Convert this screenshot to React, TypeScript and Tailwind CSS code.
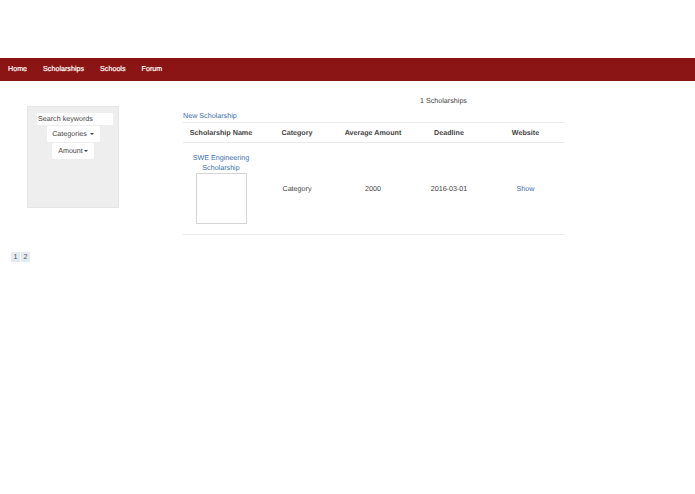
import React from 'react'

const links = ['Home', 'Scholarships', 'Schools', 'Forum']
const linkColor = 'text-[#3d6ea8]'

const Caret = () => (
  <span className="inline-block w-0 h-0 border-x-[2px] border-x-transparent border-t-[2px] border-t-[#444]" />
)

export default function App() {
  return (
    <div className="min-h-[494px] bg-white text-[7.17px] leading-[10px] text-[#444] antialiased [text-rendering:geometricPrecision] font-['Liberation_Sans',Arial,sans-serif]">
      <div className="h-[58px]" />
      <nav className="h-[23px] bg-[#8b1414] flex items-center pl-[8px] gap-[16px] text-white [-webkit-text-stroke:0.2px_white]">
        {links.map(l => (
          <span key={l} className="pb-[2px]">{l}</span>
        ))}
      </nav>

      <div className="flex">
        <aside className="ml-[27px] mt-[25px] w-[92px] h-[102px] bg-[#eeeeee] border border-[#e6e6e6] flex flex-col items-center pt-[6px]">
          <div className="ml-[4px] w-[76px] h-[12px] bg-white pl-[1px] flex items-center whitespace-nowrap">Search keywords</div>
          <div className="mt-[1px] w-[53px] h-[16px] bg-white rounded-[2px] flex items-center justify-center gap-[3px]">
            Categories <Caret />
          </div>
          <div className="mt-[1px] w-[42px] h-[16px] bg-white rounded-[2px] flex items-center justify-center gap-[1px]">
            Amount<Caret />
          </div>
        </aside>

        <main className="ml-[64px] w-[381px]">
          <div className="mt-[15px] pl-[237px] h-[10px]">1 Scholarships</div>
          <div className={`mt-[4px] h-[12px] flex items-center ${linkColor}`}>New Scholarship</div>
          <table className="w-[381px] table-fixed border-collapse text-center">
            <thead>
              <tr className="border-y border-[#e9e9e9] h-[20px] font-bold">
                <th className="w-[76px]">Scholarship Name</th>
                <th className="w-[76px]">Category</th>
                <th className="w-[76px]">Average Amount</th>
                <th className="w-[76px]">Deadline</th>
                <th className="w-[77px]">Website</th>
              </tr>
            </thead>
            <tbody>
              <tr className="border-b border-[#e9e9e9] h-[92px]">
                <td className="align-top pt-[10px]">
                  <div className={linkColor}>SWE Engineering</div>
                  <div className={linkColor}>Scholarship</div>
                  <div className="mx-auto w-[51px] h-[51px] bg-white border border-[#d4d4d4]" />
                </td>
                <td>Category</td>
                <td>2000</td>
                <td>2016-03-01</td>
                <td className={linkColor}>Show</td>
              </tr>
            </tbody>
          </table>
        </main>
      </div>

      <div className="mt-[17px] ml-[11px] flex gap-[1px] text-[#555]">
        <span className="w-[9px] h-[10px] bg-[#e4ebf1] flex items-center justify-center">1</span>
        <span className="w-[9px] h-[10px] bg-[#e4ebf1] flex items-center justify-center">2</span>
      </div>
    </div>
  )
}
